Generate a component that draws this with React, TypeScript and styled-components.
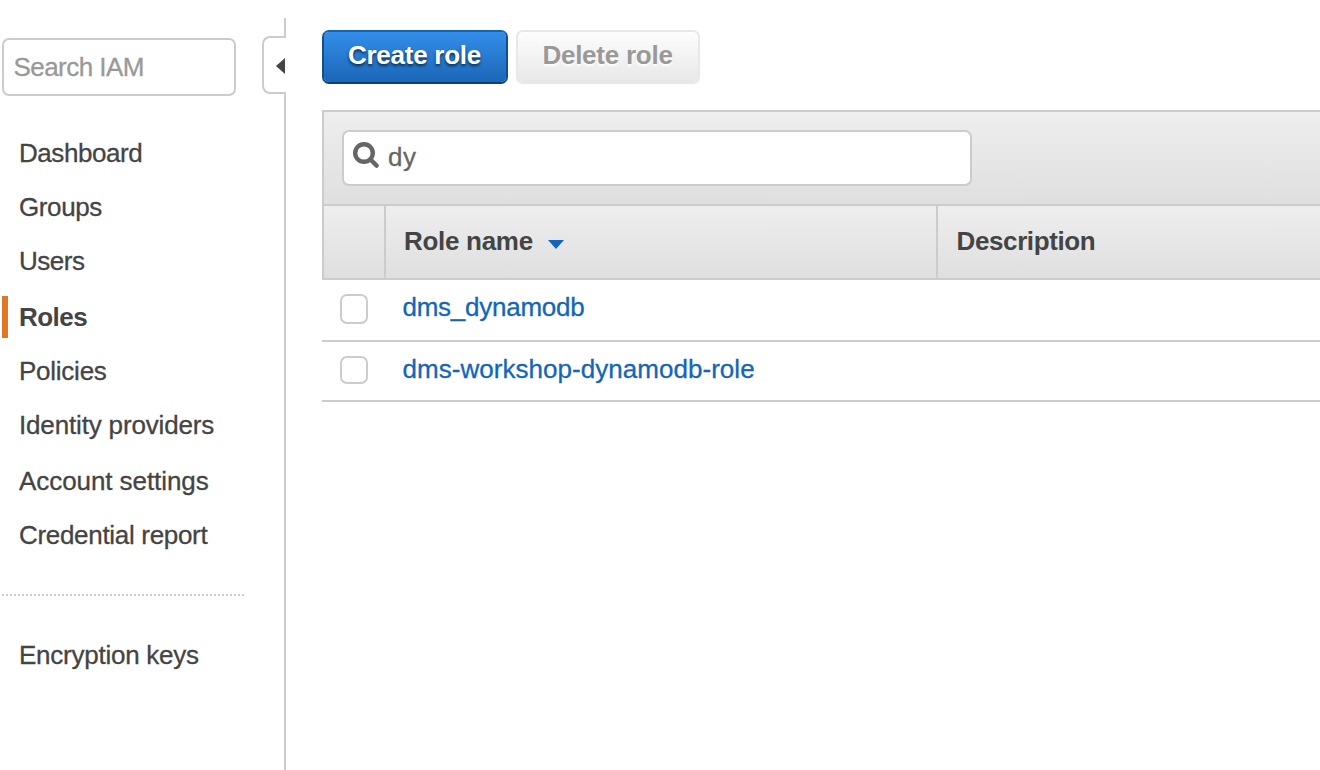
import React from "react";
import styled, { createGlobalStyle } from "styled-components";

const GlobalStyle = createGlobalStyle`
  * { box-sizing: border-box; }
  html, body { margin: 0; padding: 0; }
  body {
    background: #fff;
    color: #444;
    font-family: "Liberation Sans", Arial, sans-serif;
    font-size: 26px;
    overflow: hidden;
  }
`;

const Page = styled.div`
  display: flex;
  width: 1320px;
  height: 770px;
  overflow: hidden;
`;

const Sidebar = styled.aside`
  display: flex;
  flex-direction: column;
  width: 262px;
  padding: 38px 18px 0 2px;
`;

const SidebarSearch = styled.div`
  width: 234px;
  height: 58px;
  padding-left: 9.5px;
  border: 2px solid #ccc;
  border-radius: 7px;
  color: #999;
  line-height: 54px;
`;

const Nav = styled.nav`
  display: flex;
  flex-direction: column;
  gap: 12px;
  margin-top: 36px;
`;

const NavItem = styled.a<{ $active?: boolean; $loose?: boolean }>`
  height: 42px;
  margin-top: ${(p) => (p.$loose ? "2px" : "0")};
  padding-left: 11px;
  border-left: 6px solid ${(p) => (p.$active ? "#e07722" : "transparent")};
  font-weight: ${(p) => (p.$active ? 700 : 400)};
  line-height: 42px;
  white-space: nowrap;
`;

const Separator = styled.svg`
  display: block;
  width: 242px;
  height: 2px;
  margin: 38px 0;
`;

const Splitter = styled.div`
  display: flex;
  flex-direction: column;
  align-items: flex-end;
  width: 24px;
  padding-top: 18px;
`;

const SplitterLine = styled.div<{ $height?: number }>`
  width: 2px;
  background: #ccc;
  ${(p) => (p.$height ? `height: ${p.$height}px;` : "flex: 1;")}
`;

const CollapseHandle = styled.div`
  display: flex;
  align-items: center;
  justify-content: flex-end;
  width: 24px;
  height: 58px;
  padding: 2px 1px 0 0;
  border: 2px solid #ccc;
  border-right: 0;
  border-radius: 8px 0 0 8px;
`;

const Main = styled.main`
  flex: 1;
  min-width: 0;
  padding: 30px 0 0 36px;
`;

const Actions = styled.div`
  display: flex;
  gap: 8px;
`;

const Button = styled.button<{ $primary?: boolean }>`
  width: ${(p) => (p.$primary ? "186px" : "184px")};
  height: 54px;
  padding: 0 1px 4px 0;
  border: 2px solid;
  border-color: ${(p) => (p.$primary ? "#1763b0 #11508f #0f3f73" : "#e8e8e8")};
  border-radius: 7px;
  background: ${(p) =>
    p.$primary
      ? "linear-gradient(#338ee9, #1b66b7) padding-box"
      : "linear-gradient(#fdfdfd, #e8e8e8) padding-box"};
  color: ${(p) => (p.$primary ? "#fff" : "#999")};
  font: inherit;
  font-weight: 700;
  text-shadow: ${(p) => (p.$primary ? "0 2px 3px rgba(0, 0, 0, 0.65)" : "0 2px 2px #fff")};
`;

const Panel = styled.section`
  margin-top: 26px;
`;

const PanelHead = styled.div`
  border-left: 2px solid #ccc;
`;

const Toolbar = styled.div`
  height: 94px;
  padding: 18px;
  border-top: 2px solid #ccc;
  background: linear-gradient(#eee, #dfdfdf);
`;

const FilterBox = styled.div`
  display: flex;
  align-items: center;
  gap: 9px;
  width: 630px;
  height: 56px;
  padding: 0 9px 2px;
  border: 2px solid #ccc;
  border-radius: 7px;
  background: #fff;
  color: #666;
`;

const SearchIcon = styled.svg`
  width: 26px;
  height: 26px;
  margin-bottom: 4px;
`;

const SortArrow = styled.svg`
  width: 16px;
  height: 9px;
  margin: 6px 0 0 15px;
`;

const columns = "display: grid; grid-template-columns: 62px 552px 1fr;";

const HeaderRow = styled.div`
  ${columns}
  height: 76px;
  border: solid #ccc;
  border-width: 2px 0;
  background: linear-gradient(#eee, #dfdfdf);
`;

const HeaderCell = styled.div`
  display: flex;
  align-items: center;
  padding: 0 0 2px 18px;
  border-right: 2px solid #ccc;
  font-weight: 700;

  &:last-child {
    padding-left: 18.5px;
    border-right: 0;
  }
`;

const Row = styled.div<{ $height: number }>`
  ${columns}
  height: ${(p) => p.$height}px;
  border-bottom: 2px solid #ccc;
`;

const CheckCell = styled.div`
  display: flex;
  align-items: center;
  padding: 0 0 2px 18px;
`;

const Checkbox = styled.span<{ $height: number }>`
  width: 28px;
  height: ${(p) => p.$height}px;
  border: 2px solid #ccc;
  border-radius: 7px;
`;

const NameCell = styled.div<{ $lift: number }>`
  display: flex;
  align-items: center;
  padding: 0 0 ${(p) => p.$lift}px 18.5px;
  color: #1166bb;
  white-space: nowrap;
`;

const Label = styled.span<{ $track?: number; $bold?: boolean }>`
  letter-spacing: ${(p) => p.$track ?? -0.25}px;
  -webkit-text-stroke: ${(p) => (p.$bold ? "0" : "0.3px currentColor")};
`;

const links = [
  { name: "Dashboard", track: -0.45 },
  { name: "Groups", track: -0.4 },
  { name: "Users", track: -0.5 },
  { name: "Roles", track: -0.55, active: true, loose: true },
  { name: "Policies", track: -0.25 },
  { name: "Identity providers", track: -0.16 },
  { name: "Account settings", track: -0.07, loose: true },
  { name: "Credential report", track: -0.31 },
];

const roles = [
  { name: "dms_dynamodb", track: -0.25, height: 62, box: 30, lift: 6 },
  { name: "dms-workshop-dynamodb-role", track: 0.04, height: 60, box: 28, lift: 4 },
];

export default function App() {
  return (
    <Page>
      <GlobalStyle />
      <Sidebar>
        <SidebarSearch>
          <Label $track={-0.55}>Search IAM</Label>
        </SidebarSearch>
        <Nav>
          {links.map((l) => (
            <NavItem key={l.name} $active={l.active} $loose={l.loose}>
              <Label $track={l.track} $bold={l.active}>{l.name}</Label>
            </NavItem>
          ))}
        </Nav>
        <Separator viewBox="0 0 242 2">
          <path d="M0 1H242" stroke="#ccc" strokeWidth="2" strokeDasharray="2 2" />
        </Separator>
        <NavItem>
          <Label>Encryption keys</Label>
        </NavItem>
      </Sidebar>
      <Splitter>
        <SplitterLine $height={18} />
        <CollapseHandle>
          <svg width="9" height="16" viewBox="0 0 9 16">
            <path d="M9 0V16L0 8Z" fill="#444" />
          </svg>
        </CollapseHandle>
        <SplitterLine />
      </Splitter>
      <Main>
        <Actions>
          <Button $primary>
            <Label $bold>Create role</Label>
          </Button>
          <Button disabled>
            <Label $bold>Delete role</Label>
          </Button>
        </Actions>
        <Panel>
          <PanelHead>
            <Toolbar>
              <FilterBox>
                <SearchIcon viewBox="0 0 26 26" fill="none" stroke="#666">
                  <circle cx="11" cy="11" r="8.8" strokeWidth="4.4" />
                  <path d="M17.5 17.5L23.6 23.6" strokeWidth="4.4" strokeLinecap="round" />
                </SearchIcon>
                <Label $track={0.5}>dy</Label>
              </FilterBox>
            </Toolbar>
            <HeaderRow>
              <HeaderCell />
              <HeaderCell>
                <Label $bold $track={-0.3}>Role name</Label>
                <SortArrow viewBox="0 0 16 9">
                  <path d="M0 0H16L8 9Z" fill="#1166bb" />
                </SortArrow>
              </HeaderCell>
              <HeaderCell>
                <Label $bold $track={-0.38}>Description</Label>
              </HeaderCell>
            </HeaderRow>
          </PanelHead>
          {roles.map((r) => (
            <Row key={r.name} $height={r.height}>
              <CheckCell>
                <Checkbox $height={r.box} />
              </CheckCell>
              <NameCell $lift={r.lift}>
                <Label $track={r.track}>{r.name}</Label>
              </NameCell>
            </Row>
          ))}
        </Panel>
      </Main>
    </Page>
  );
}
